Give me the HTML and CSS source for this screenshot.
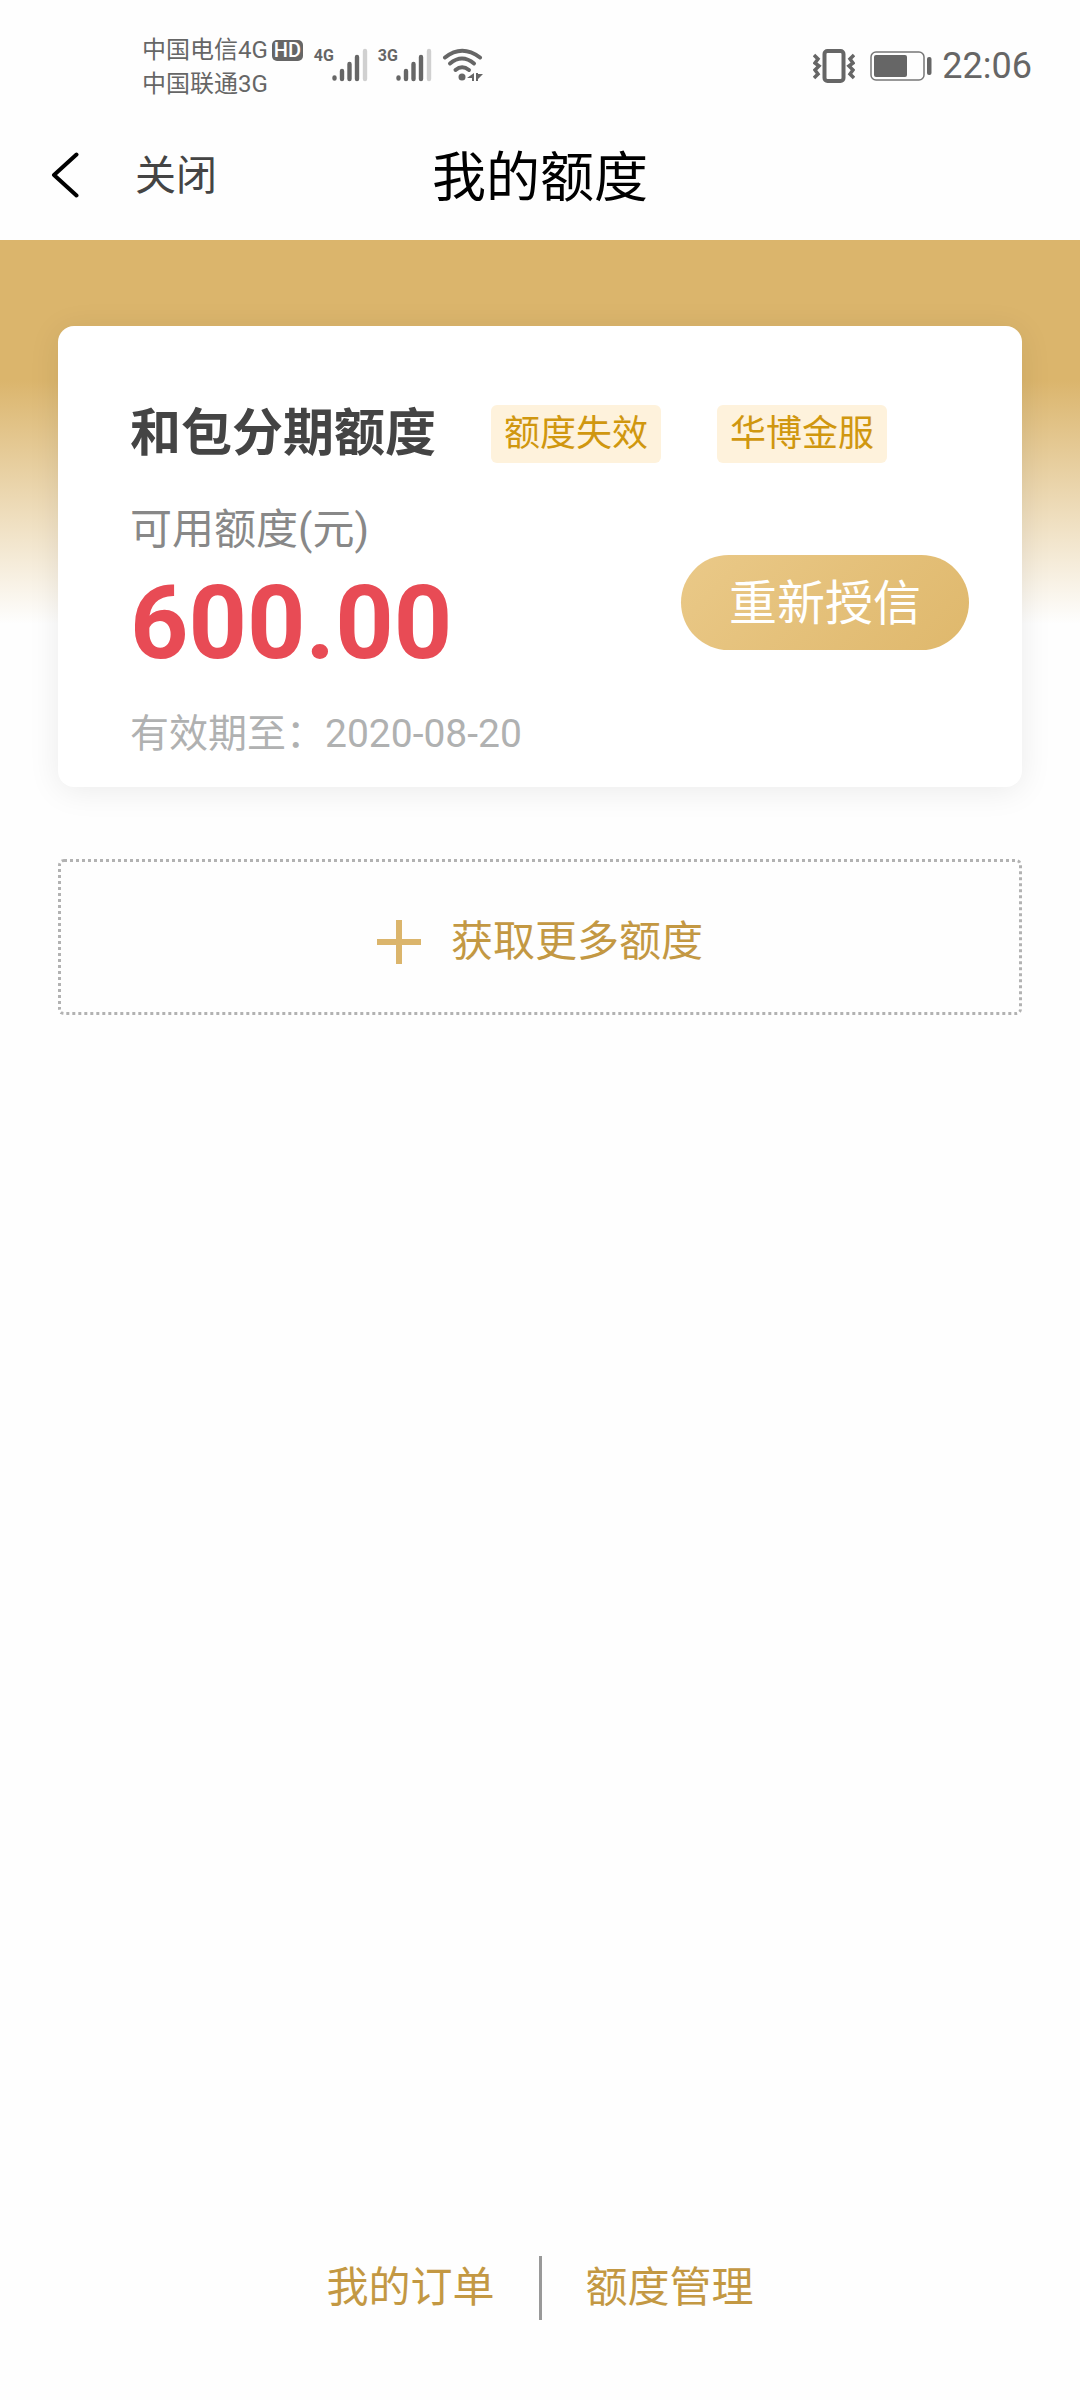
FILE: index.html
```html
<!DOCTYPE html>
<html lang="zh-CN">
<head>
<meta charset="utf-8">
<meta name="viewport" content="width=device-width, initial-scale=1">
<title>我的额度</title>
<link rel="stylesheet" href="styles.css">
</head>
<body>
<div class="status-bar">
  <div class="carriers">
    <div class="carrier">中国电信4G<span class="hd">HD</span></div>
    <div class="carrier">中国联通3G</div>
  </div>
  <div class="signals">
    <div class="signal">
      <span class="net">4G</span>
      <svg class="bars" width="36" height="34" viewBox="0 0 36 34" aria-hidden="true">
        <g stroke="#666" stroke-width="4.4" stroke-linecap="round"><path d="M2.5 29.5v1M10 23v8M17.500 16v15M25 9v22"/><path stroke="#d0d0d0" d="M33 3v28"/></g>
      </svg>
    </div>
    <div class="signal">
      <span class="net">3G</span>
      <svg class="bars" width="36" height="34" viewBox="0 0 36 34" aria-hidden="true">
        <g stroke="#666" stroke-width="4.4" stroke-linecap="round"><path d="M2.500 29.500v1M10 23v8M17.500 16v15M25 9v22"/><path stroke="#d0d0d0" d="M33 3v28"/></g>
      </svg>
    </div>
    <svg class="wifi" width="42" height="34" viewBox="0 0 42 34" aria-hidden="true">
      <g fill="none" stroke="#666" stroke-width="4" stroke-linecap="round"><path d="M3 9.500Q20 -4 38 9.500"/><path d="M8 15.500Q20 5.500 32 15.500"/><path d="M13.500 22Q20 16.500 27 22"/></g>
      <circle cx="20" cy="29" r="3.500" fill="#666"/>
      <path fill="#666" d="M32 25v8h-2v-3h-5zM34 25v8h2v-2l5-5h-5v-1z"/>
    </svg>
  </div>
  <div class="device">
    <svg width="42" height="34" viewBox="0 0 42 34" aria-hidden="true">
      <rect x="11.500" y="2" width="19" height="30" rx="3" fill="none" stroke="#666" stroke-width="4"/>
      <path fill="none" stroke="#666" stroke-width="3.500" d="M1 6l4 4-3 4 4 3-4 4 3 4-4 4M41 6l-4 4 3 4-4 3 4 4-3 4 4 4"/>
    </svg>
    <svg width="62" height="30" viewBox="0 0 62 30" aria-hidden="true">
      <rect x="1" y="1" width="53" height="28" rx="5" fill="none" stroke="#777" stroke-width="1.500"/>
      <rect x="4" y="4" width="33" height="22" rx="2" fill="#666"/>
      <rect x="57" y="6" width="4.500" height="18" rx="2" fill="#666"/>
    </svg>
    <span class="time">22:06</span>
  </div>
</div>

<header class="nav">
  <div class="nav-left">
    <button class="back" type="button" aria-label="返回">
      <svg width="28" height="46" viewBox="0 0 28 46" aria-hidden="true"><path d="M25.500 2.500L3 23l22.500 20.500" fill="none" stroke="#000" stroke-width="4" stroke-linecap="round" stroke-linejoin="round"/></svg>
    </button>
    <button class="close" type="button">关闭</button>
  </div>
  <h1 class="nav-title">我的额度</h1>
</header>

<main class="content">
  <section class="card">
    <div class="card-head">
      <h2 class="card-title">和包分期额度</h2>
      <div class="tags">
        <span class="tag">额度失效</span>
        <span class="tag">华博金服</span>
      </div>
    </div>
    <div class="card-body">
      <div>
        <p class="label">可用额度(元)</p>
        <p class="amount">600.00</p>
      </div>
      <button class="renew" type="button">重新授信</button>
    </div>
    <p class="expiry">有效期至：2020-08-20</p>
  </section>
  <button class="more" type="button">
    <svg width="44" height="44" viewBox="0 0 44 44" aria-hidden="true"><path d="M22 0v44M0 22h44" stroke="#dbb56c" stroke-width="6"/></svg>
    <span class="more-text">获取更多额度</span>
  </button>
</main>

<footer class="footer">
  <a class="footer-link" href="#orders">我的订单</a>
  <span class="divider"></span>
  <a class="footer-link" href="#manage">额度管理</a>
</footer>
</body>
</html>
```

FILE: styles.css
```css
* {
  box-sizing: border-box;
}

body {
  margin: 0;
  min-height: 100vh;
  display: flex;
  flex-direction: column;
  background: #fefefe;
  color: #444;
  font-family: Roboto, "Noto Sans CJK SC", sans-serif;
}

h1, h2, p {
  margin: 0;
}

button {
  padding: 0;
  border: 0;
  background: none;
  color: inherit;
  font: inherit;
}

svg {
  display: block;
  flex: none;
}

/* Status bar */
.status-bar {
  display: flex;
  justify-content: space-between;
  height: 110px;
  padding: 32px 48px 0 142px;
  color: #666;
}

.carriers {
  flex: none;
  padding-top: 1px;
}

.carrier {
  display: flex;
  align-items: center;
  height: 34px;
  font-size: 24px;
  line-height: 34px;
}

.hd {
  width: 31px;
  margin-left: 4px;
  border-radius: 5px;
  background: #666;
  color: #fff;
  font-size: 20px;
  font-weight: 500;
  line-height: 21px;
  text-align: center;
}

.signals {
  display: flex;
  gap: 10px;
  margin: 16px auto 0 11px;
}

.signal {
  display: flex;
  width: 54px;
  justify-content: space-between;
}

.net {
  width: 18px;
  font-family: "Liberation Sans Narrow", Roboto, sans-serif;
  font-size: 16px;
  font-weight: 700;
  line-height: 16px;
}

.device {
  display: flex;
  align-items: center;
  gap: 15px;
  height: 68px;
}

.time {
  margin-left: -5px;
  font-size: 36px;
  line-height: 40px;
}

/* Navigation */
.nav {
  display: grid;
  grid-template-columns: 1fr auto 1fr;
  align-items: center;
  height: 130px;
  padding: 0 51px;
}

.nav-left {
  display: flex;
  align-items: center;
  gap: 56px;
}

.close {
  padding-top: 2px;
  font-size: 41px;
  line-height: 60px;
}

.nav-title {
  padding-top: 8px;
  color: #000;
  font-size: 54px;
  font-weight: 400;
  line-height: 80px;
}

/* Credit card panel */
.content {
  padding: 86px 58px 0;
  background: linear-gradient(#dbb56c 140px, #fefefe 384px);
}

.card {
  padding: 74px 53px 23px 72px;
  border-radius: 16px;
  background: #fff;
  box-shadow: 0 4px 32px rgba(0, 0, 0, 0.08);
}

.card-head {
  display: flex;
  align-items: center;
  gap: 55px;
  height: 68px;
}

.card-title {
  font-size: 51px;
  font-weight: 700;
  line-height: 66px;
}

.tags {
  display: flex;
  gap: 56px;
}

.tag {
  width: 170px;
  border-radius: 6px;
  background: #fef2dc;
  color: #d0970f;
  font-size: 36px;
  line-height: 58px;
  text-align: center;
}

.card-body {
  display: flex;
  align-items: center;
  justify-content: space-between;
  margin-top: 32px;
}

.label {
  color: #888;
  font-size: 42px;
  line-height: 60px;
}

.amount {
  color: #e84b55;
  font-size: 102px;
  font-weight: 700;
  line-height: 126px;
}

.renew {
  width: 288px;
  height: 95px;
  margin-top: 18px;
  padding-bottom: 6px;
  border-radius: 48px;
  background: linear-gradient(135deg, #eac988, #dfb86c);
  color: #fff;
  font-size: 48px;
}

.expiry {
  margin-top: 18px;
  color: #b0b1b1;
  font-size: 39px;
  line-height: 60px;
}

.more {
  display: flex;
  align-items: center;
  justify-content: center;
  gap: 30px;
  width: 100%;
  height: 156px;
  margin-top: 72px;
  padding-top: 10px;
  border: 3px dotted #b2b2b2;
  border-radius: 6px;
  color: #c39843;
  font-size: 42px;
}

.more-text {
  line-height: 60px;
}

/* Bottom links */
.footer {
  display: grid;
  grid-template-columns: 1fr 3px 1fr;
  align-items: center;
  gap: 44px;
  margin-top: auto;
  padding-bottom: 80px;
}

.footer-link {
  color: #c39843;
  font-size: 42px;
  line-height: 60px;
  text-decoration: none;
}

.footer-link:first-child {
  text-align: right;
}

.divider {
  height: 64px;
  background: #999;
}
```
